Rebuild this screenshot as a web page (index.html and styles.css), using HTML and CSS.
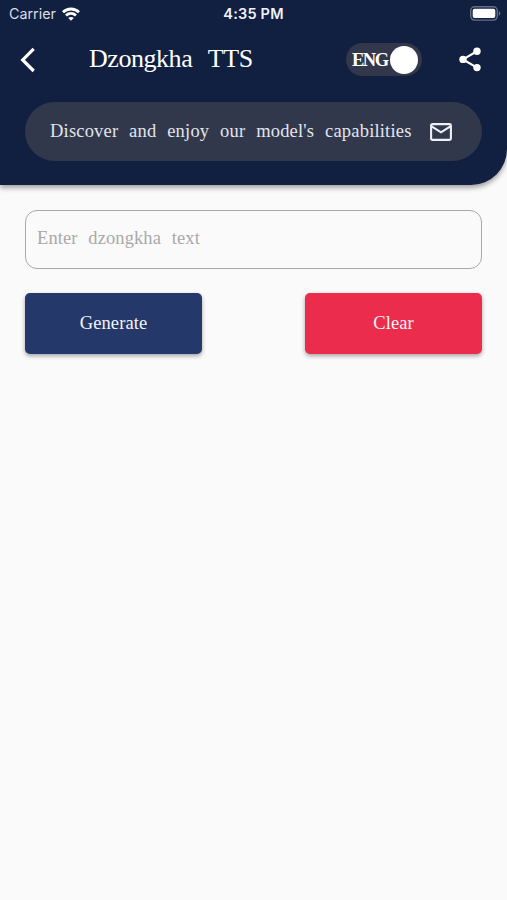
FILE: index.html
```html
<!DOCTYPE html>
<html lang="en">
<head>
  <meta charset="UTF-8">
  <meta name="viewport" content="width=device-width, initial-scale=1.0">
  <title>Dzongkha TTS</title>
  <link rel="stylesheet" href="styles.css">
</head>
<body>

  <header class="header">
    <div class="status-bar">
      <div class="carrier">
        <span>Carrier</span>
        <svg class="wifi" viewBox="0 0 18 14" width="18" height="14" fill="none" stroke="#fff" stroke-width="2.8">
          <path d="M1 5.2C5.5.9 12.5.9 17 5.2"/>
          <path d="M4 8.5c2.9-2.7 7.1-2.7 10 0"/>
          <path d="M9 13.8 6.2 11c1.6-1.4 4-1.4 5.6 0z" fill="#fff" stroke="none"/>
        </svg>
      </div>
      <span class="time">4:35 PM</span>
      <svg class="battery" viewBox="0 0 31 15" width="31" height="15">
        <rect x=".7" y=".7" width="26.6" height="13.4" rx="4" fill="none" stroke="#666f8a" stroke-width="1.4"/>
        <rect x="2.7" y="2.7" width="22.6" height="9.4" rx="2" fill="#fff"/>
        <path d="M28.8 5v4.8c2-.8 2-4 0-4.8z" fill="#666f8a"/>
      </svg>
    </div>

    <div class="nav-bar">
      <svg class="back" viewBox="0 0 16 26" width="16" height="26" fill="none" stroke="#fff" stroke-width="3.2">
        <path d="M13.7 1.8 2.7 12.9l11 11.1"/>
      </svg>
      <h1 class="title">Dzongkha TTS</h1>
      <div class="toggle">
        <span class="toggle-label">ENG</span>
        <span class="toggle-knob"></span>
      </div>
      <svg class="share" viewBox="0 0 22 25" width="22" height="25" fill="#fff">
        <path d="M18 4.2 4 12.4l14 8.2" fill="none" stroke="#fff" stroke-width="2.2"/>
        <circle cx="18" cy="4.2" r="3.7"/>
        <circle cx="4" cy="12.4" r="3.7"/>
        <circle cx="18" cy="20.6" r="3.7"/>
      </svg>
    </div>

    <div class="banner">
      <span class="banner-text">Discover and enjoy our model's capabilities</span>
      <svg class="mail" viewBox="0 0 22 18" width="22" height="18" fill="none" stroke="#edf0f7" stroke-width="2.1">
        <rect x="1.1" y="1.1" width="19.8" height="15.8" rx="1.4"/>
        <path d="m1.6 3.3 9.4 6 9.4-6"/>
      </svg>
    </div>
  </header>

  <main class="content">
    <input type="text" class="text-input" placeholder="Enter dzongkha text">
    <div class="actions">
      <button type="button" class="btn btn-generate">Generate</button>
      <button type="button" class="btn btn-clear">Clear</button>
    </div>
  </main>

</body>
</html>
```

FILE: styles.css
```css
* {
  margin: 0;
  padding: 0;
  box-sizing: border-box;
}

body {
  background: #fafafa;
  min-height: 100vh;
  font-family: "Liberation Serif", serif;
}

.header {
  height: 185px;
  background: #111f41;
  border-bottom-right-radius: 36px;
  box-shadow: 0 3px 5px rgba(0, 0, 0, 0.35);
}

.status-bar {
  height: 27px;
  padding: 0 6px 0 9px;
  display: grid;
  grid-template-columns: 1fr auto 1fr;
  align-items: center;
  color: #fff;
  font-family: Inter, sans-serif;
}

.carrier {
  display: flex;
  align-items: center;
  gap: 6px;
  color: #d9dde6;
  font-size: 14.3px;
}

.time {
  margin-left: -3px;
  color: #f0f2f7;
  font-size: 14.5px;
  font-weight: 600;
  letter-spacing: 0.2px;
}

.battery {
  justify-self: end;
}

.nav-bar {
  height: 65px;
  padding: 0 26px 0 20px;
  display: flex;
  align-items: center;
}

.title {
  flex: 1;
  margin-left: 53px;
  padding-bottom: 2px;
  color: #fff;
  font-size: 26px;
  font-weight: normal;
  letter-spacing: -0.45px;
  word-spacing: 10px;
  white-space: nowrap;
}

.toggle {
  width: 76px;
  height: 33px;
  margin-right: 37px;
  padding: 0 4px 0 6px;
  display: flex;
  align-items: center;
  justify-content: space-between;
  border-radius: 17px;
  background: #33374b;
}

.toggle-label {
  padding-top: 1px;
  color: #fff;
  font-size: 18.5px;
  font-weight: bold;
  letter-spacing: -1.5px;
}

.toggle-knob {
  width: 28px;
  height: 28px;
  border-radius: 50%;
  background: #fff;
}

.banner {
  height: 59px;
  margin: 10px 25px 0;
  padding: 0 30px 0 25px;
  display: flex;
  align-items: center;
  justify-content: space-between;
  border-radius: 30px;
  background: #31384b;
}

.banner-text {
  color: #e2e5ed;
  font-size: 18.5px;
  letter-spacing: 0.19px;
  word-spacing: 6px;
  white-space: nowrap;
}

.content {
  padding: 25px;
}

.text-input {
  display: block;
  width: 100%;
  height: 59px;
  padding: 0 11px 3px;
  border: 1.5px solid #a8a8a8;
  border-radius: 12px;
  background: transparent;
  font-family: inherit;
  font-size: 18.5px;
  letter-spacing: 0.1px;
  word-spacing: 6px;
}

.text-input::placeholder {
  color: #a9a9a9;
}

.actions {
  margin-top: 24px;
  display: flex;
  justify-content: space-between;
}

.btn {
  width: 177px;
  height: 61px;
  border: none;
  border-radius: 5px;
  box-shadow: 0 2px 4px rgba(0, 0, 0, 0.35);
  color: #f4f5fa;
  font-family: inherit;
  font-size: 18.5px;
  letter-spacing: 0.1px;
  cursor: pointer;
}

.btn-generate {
  background: #243869;
}

.btn-clear {
  background: #eb2c4c;
}
```
